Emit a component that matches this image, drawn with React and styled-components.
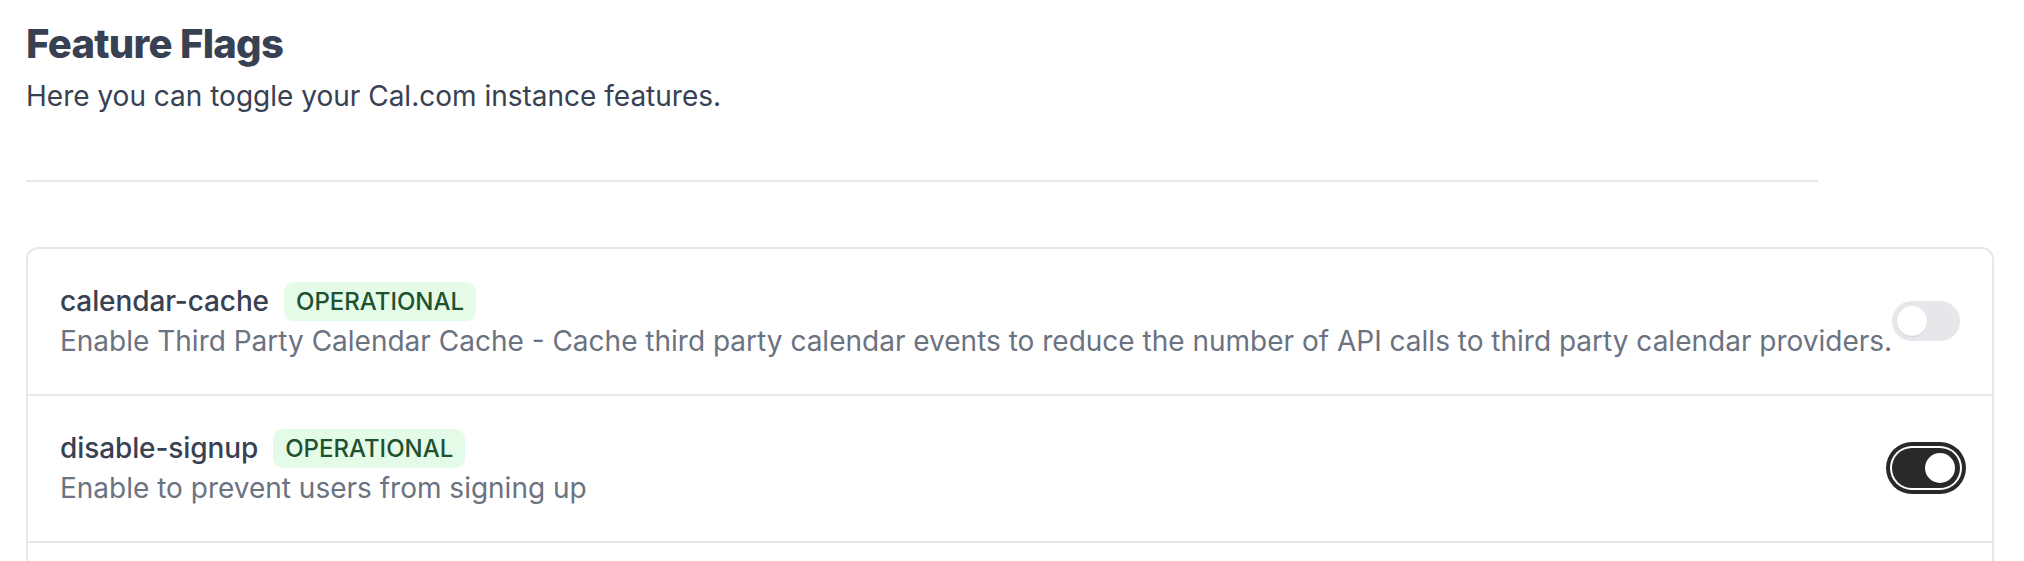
import styled, { createGlobalStyle } from "styled-components";
import { useState } from "react";

const GlobalStyle = createGlobalStyle`
  html, body {
    margin: 0;
    padding: 0;
    background: #ffffff;
  }
  body {
    font-family: "Inter", "Noto Sans", sans-serif;
    -webkit-font-smoothing: antialiased;
  }
`;

const Page = styled.main`
  padding: 16px 0 0 26px;
`;

const Header = styled.header`
  display: flex;
  flex-direction: column;
  gap: 4px;
`;

const Title = styled.h1`
  margin: 0;
  font-family: "Inter", sans-serif;
  font-weight: 800;
  font-size: 40px;
  line-height: 56px;
  letter-spacing: -0.7px;
  color: #374151;
`;

const Subtitle = styled.p`
  margin: 0;
  font-size: 28px;
  line-height: 40px;
  color: #374151;
`;

const Divider = styled.hr`
  width: 1792px;
  margin: 64px 0 65px;
  border: 0;
  border-top: 2px solid #e5e7eb;
`;

const Card = styled.ul`
  list-style: none;
  margin: 0;
  padding: 0;
  width: 1968px;
  box-sizing: border-box;
  border: 2px solid #e5e7eb;
  border-radius: 12px;
`;

const Row = styled.li`
  display: flex;
  align-items: center;
  padding: 32px 32px 33px;
  border-top: ${(p) => (p.first ? "0" : "2px solid #e5e7eb")};
`;

const Info = styled.div`
  flex: 1;
  min-width: 0;
`;

const NameLine = styled.div`
  display: flex;
  align-items: center;
  gap: 15px;
  height: 40px;
`;

const Name = styled.span`
  font-size: 28px;
  line-height: 40px;
  font-weight: 500;
  letter-spacing: -0.1px;
  color: #374151;
`;

const Badge = styled.span`
  display: inline-flex;
  align-items: center;
  height: 39px;
  padding: 0 12px;
  border-radius: 10px;
  background: #e4fbe8;
  color: #1f5130;
  font-size: 24px;
  font-weight: 500;
  text-transform: uppercase;
`;

const Description = styled.p`
  margin: 0;
  font-size: 28px;
  line-height: 40px;
  color: #6b7280;
  white-space: nowrap;
`;

const Switch = styled.button`
  position: relative;
  flex: none;
  width: 68px;
  height: 40px;
  padding: 0;
  border: 0;
  border-radius: 999px;
  cursor: pointer;
  background: ${(p) => (p.checked ? "#292929" : "#e5e7eb")};
  box-shadow: ${(p) =>
    p.checked ? "0 0 0 2px #ffffff, 0 0 0 6px #292929" : "none"};
`;

const Knob = styled.span`
  position: absolute;
  top: 5px;
  left: 5px;
  width: 30px;
  height: 30px;
  border-radius: 50%;
  background: #ffffff;
  box-shadow: 0 1px 2px rgba(0, 0, 0, 0.08);
  transform: translateX(${(p) => (p.checked ? "28px" : "0")});
  transition: transform 0.15s ease;
`;

const initialFlags = [
  {
    slug: "calendar-cache",
    description:
      "Enable Third Party Calendar Cache - Cache third party calendar events to reduce the number of API calls to third party calendar providers.",
    enabled: false,
  },
  {
    slug: "disable-signup",
    description: "Enable to prevent users from signing up",
    enabled: true,
  },
  {
    slug: "emails",
    description: "Enable to send emails to users",
    enabled: true,
  },
];

export default function App() {
  const [flags, setFlags] = useState(initialFlags);

  const toggle = (slug) =>
    setFlags((list) =>
      list.map((f) => (f.slug === slug ? { ...f, enabled: !f.enabled } : f))
    );

  return (
    <>
      <GlobalStyle />
      <Page>
        <Header>
          <Title>Feature Flags</Title>
          <Subtitle>Here you can toggle your Cal.com instance features.</Subtitle>
        </Header>
        <Divider />
        <Card>
          {flags.map((flag, i) => (
            <Row key={flag.slug} first={i === 0}>
              <Info>
                <NameLine>
                  <Name>{flag.slug}</Name>
                  <Badge>Operational</Badge>
                </NameLine>
                <Description>{flag.description}</Description>
              </Info>
              <Switch
                type="button"
                role="switch"
                aria-checked={flag.enabled}
                checked={flag.enabled}
                onClick={() => toggle(flag.slug)}
              >
                <Knob checked={flag.enabled} />
              </Switch>
            </Row>
          ))}
        </Card>
      </Page>
    </>
  );
}
